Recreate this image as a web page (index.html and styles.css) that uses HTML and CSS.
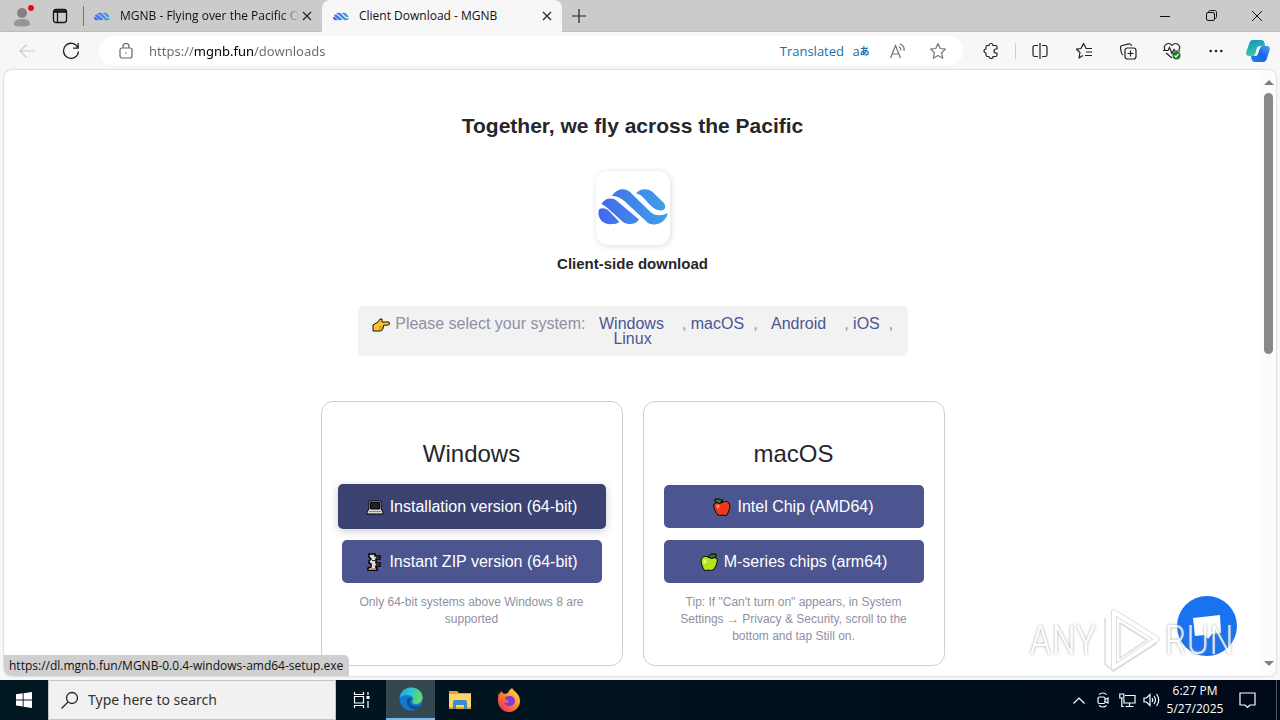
FILE: index.html
```html
<!DOCTYPE html>
<html lang="en">
<head>
<meta charset="utf-8">
<title>Client Download - MGNB</title>
<link rel="stylesheet" href="styles.css">
</head>
<body>
<svg class="defs" aria-hidden="true">
  <defs>
    <linearGradient id="wave" gradientUnits="userSpaceOnUse" x1="0" x2="70" y1="0" y2="0"><stop offset="0" stop-color="#4168f0"/><stop offset="1" stop-color="#40a2e6"/></linearGradient>
    <symbol id="mgnb" viewBox="0 0 70 36">
      <g fill="url(#wave)">
        <path d="M1 20.500C4 18.500 8 19 11 22L20.500 32Q21.500 34 19 34.300C15 35.500 9 36 5 33 1 30-.5 25 1 20.500Z"/>
        <path d="M3.500 15C7 9 14 8 19 12L41 30.500C38 35.500 30 36.500 25 33L10 19.500C8 17.500 6 16.500 3.500 15Z"/>
        <path d="M14 7C18 .5 26-2 32 3L52 22.500C57 27.500 64 27 69.500 24C69 32 59 38.500 50 34L27 12.500C23 9 19 7 14 7Z"/>
        <path d="M38 4.500C42-.5 49-1 54 2.500L65.500 13.500C69 18 67 22 62 21.500 54 21 48 10 43 6.500 41.500 5.500 40 4.800 38 4.500Z"/>
      </g>
    </symbol>
  </defs>
</svg>

<header class="tabbar">
  <button class="profile" aria-label="Profile">
    <svg width="24" height="24" viewBox="0 0 24 24"><circle cx="12" cy="9" r="5" fill="#858080"/><path d="M4 21c0-5 3-6 8-6s8 1 8 6c-3 2-13 2-16 0z" fill="#9a9595"/><circle cx="21" cy="4" r="3" fill="#e00b1c"/></svg>
  </button>
  <button class="workspace" aria-label="Tab actions">
    <svg width="16" height="16" viewBox="0 0 16 16" fill="none" stroke="#111" stroke-width="1.3"><rect x="1.5" y="1.5" width="13" height="13" rx="2.5"/><path d="M1.500 3.500h13" stroke-width="2.500"/><path d="M5.500 4v10"/></svg>
  </button>
  <nav class="tabs">
    <div class="tab">
      <svg class="favicon" viewBox="0 0 70 36"><use href="#mgnb"/></svg>
      <span class="tab-title fade">MGNB - Flying over the Pacific O</span>
      <button class="tab-close" aria-label="Close tab"><svg width="10" height="10" viewBox="0 0 10 10" stroke="#222" stroke-width="1.2"><path d="M1 1l8 8M9 1L1 9"/></svg></button>
    </div>
    <div class="tab active">
      <svg class="favicon" viewBox="0 0 70 36"><use href="#mgnb"/></svg>
      <span class="tab-title">Client Download - MGNB</span>
      <button class="tab-close" aria-label="Close tab"><svg width="10" height="10" viewBox="0 0 10 10" stroke="#222" stroke-width="1.2"><path d="M1 1l8 8M9 1L1 9"/></svg></button>
    </div>
  </nav>
  <button class="new-tab" aria-label="New tab"><svg width="14" height="14" viewBox="0 0 14 14" stroke="#222" stroke-width="1.2"><path d="M7 0v14M0 7h14"/></svg></button>
  <div class="window-buttons">
    <button aria-label="Minimize"><svg width="10" height="10" viewBox="0 0 10 10" stroke="#111"><path d="M0 5.5h10"/></svg></button>
    <button aria-label="Restore"><svg width="11" height="11" viewBox="0 0 11 11" stroke="#111" fill="none"><rect x=".5" y="2.5" width="8" height="8" rx="1.5"/><path d="M2.5 2.500c0-1.500.5-2 2-2H8.500c1.500 0 2 .5 2 2V6.500c0 1.500-.5 2-2 2"/></svg></button>
    <button aria-label="Close"><svg width="12" height="12" viewBox="0 0 12 12" stroke="#111"><path d="M1 1l10 10M11 1L1 11"/></svg></button>
  </div>
</header>

<div class="toolbar">
  <button class="tool" aria-label="Back"><svg width="16" height="14" viewBox="0 0 16 14" fill="none" stroke="#c9c9c9" stroke-width="1.200"><path d="M16 7H1M7.500.5L1 7l6.500 6.500"/></svg></button>
  <button class="tool" aria-label="Refresh"><svg width="18" height="18" viewBox="0 0 18 18" fill="none" stroke="#222" stroke-width="1.300"><path d="M16 6A7.500 7.500 0 1 0 16.500 9.500M16.200 1v5.200H11"/></svg></button>
  <div class="omnibox">
    <svg class="lock" width="14" height="16" viewBox="0 0 14 16" fill="none" stroke="#666" stroke-width="1.200"><rect x="1" y="5" width="12" height="10" rx="2"/><path d="M4 5V3.500a3 3 0 0 1 6 0V5"/><circle cx="7" cy="10" r=".8" fill="#666" stroke="none"/></svg>
    <input class="url" type="text" aria-label="Address" value="https://mgnb.fun/downloads">
    <span class="translated">Translated</span>
    <button class="translate" aria-label="Translate">a<b>あ</b></button>
    <button class="pill-tool" aria-label="Read aloud"><svg width="18" height="16" viewBox="0 0 18 16" fill="none" stroke="#707070" stroke-width="1.200"><path d="M1.500 15L6.500 2.500 11.500 15M3.200 11h6.700M10 3.500c1.500 1 2 2.500 1.800 4M11 1c3.500 1.500 4.500 4.500 4 7"/></svg></button>
    <button class="pill-tool" aria-label="Add to favorites"><svg width="18" height="18" viewBox="0 0 18 18" fill="none" stroke="#777" stroke-width="1.200" stroke-linejoin="round"><path d="M9 1.500l2.200 5 5.300.6-4 3.600 1.200 5.500L9 13.500l-4.700 2.700 1.200-5.500-4-3.600 5.300-.6z"/></svg></button>
  </div>
  <button class="tool" aria-label="Extensions"><svg width="18" height="18" viewBox="0 0 18 18" fill="none" stroke="#222" stroke-width="1.200" stroke-linejoin="round"><path d="M5 3.500h2a2 2 0 1 1 4 0h2.500q1.500 0 1.500 1.500V7h-1a2 2 0 1 0 0 4h1v2q0 1.500-1.500 1.500H11a2 2 0 1 1-4 0H5.500Q4 14.500 4 13V11a2 2 0 1 1 0-4V5q0-1.500 1-1.500z"/></svg></button>
  <span class="divider"></span>
  <button class="tool" aria-label="Split screen"><svg width="16" height="16" viewBox="0 0 16 16" fill="none" stroke="#222" stroke-width="1.200"><path d="M6 2.500H3Q1 2.500 1 4v8q0 1.500 2 1.500h3M10 2.500h3q2 0 2 1.500v8q0 1.500-2 1.500h-3M8 0v16"/></svg></button>
  <button class="tool" aria-label="Favorites"><svg width="18" height="18" viewBox="0 0 18 18" fill="none" stroke="#222" stroke-width="1.200" stroke-linejoin="round"><path d="M11 6L8.500 1.500 6 6.500l-4.500.7L5 10.500l-1 5.500 4-2.500M10.500 6.500H17M11 10h6M10 13.500h7"/></svg></button>
  <button class="tool" aria-label="Collections"><svg width="18" height="18" viewBox="0 0 18 18" fill="none" stroke="#222" stroke-width="1.200"><rect x="6" y="6" width="11" height="11" rx="2.500"/><path d="M11.500 8.500v6M8.500 11.500h6M4 13C3 12.500 2.500 11.500 2.200 10L1.500 6Q1.200 4 3 3.500L10 1.800q2-.3 2.500 2"/></svg></button>
  <button class="tool" aria-label="Browser essentials"><svg width="18" height="18" viewBox="0 0 18 18" fill="none" stroke="#222" stroke-width="1.200"><path d="M2 8C0 4 3 1.500 5.500 1.500 7.500 1.500 9 3.500 9 3.500S10.500 1.500 12.500 1.500C15 1.500 18 4 16 8M0 8.500h5l1.500-3 2.500 6 2-4 1 1.500h5M3 11l6 5"/><circle cx="13.500" cy="13.500" r="4" fill="#187a20" stroke="none"/><path d="M11.500 13.500l1.500 1.500 2.500-3" stroke="#fff"/></svg></button>
  <button class="tool" aria-label="Settings and more"><svg width="14" height="4" viewBox="0 0 14 4" fill="#222"><circle cx="1.700" cy="2" r="1.300"/><circle cx="7" cy="2" r="1.300"/><circle cx="12.300" cy="2" r="1.300"/></svg></button>
  <button class="tool copilot" aria-label="Copilot"><svg width="24" height="24" viewBox="0 0 24 24"><defs><linearGradient id="cpa" x1="0" y1="0" x2=".3" y2="1"><stop offset="0" stop-color="#168fc8"/><stop offset="1" stop-color="#39c9a0"/></linearGradient><linearGradient id="cpb" x1="1" y1="0" x2="0" y2="1"><stop offset="0" stop-color="#4aa8f2"/><stop offset=".5" stop-color="#1b62ea"/><stop offset="1" stop-color="#1688dd"/></linearGradient></defs><path d="M7 1h8q3 0 3.500 3l.5 3h-3q-3 0-4 3l-1.500 4q-1 3-3.500 3H3Q-.5 17 .3 13L3 5Q4 1 7 1z" fill="url(#cpa)"/><path d="M17 23H9q-3 0-3.500-3L5 17h3q3 0 4-3l1.500-4q1-3 3.500-3h4q3.500 0 2.700 4L21 19q-1 4-4 4z" fill="url(#cpb)"/><path d="M11 8.500q1-1.500 4-1.500-1 1-1.500 3l-1.500 5q-.5 2-3 2H8q1-1 1.500-3z" fill="#fff"/></svg></button>
</div>

<div class="viewport">
  <main class="page">
    <h1>Together, we fly across the Pacific</h1>
    <div class="app-logo"><svg width="70" height="36" viewBox="0 0 70 36"><use href="#mgnb"/></svg></div>
    <h2 class="subtitle">Client-side download</h2>

    <p class="systems"><svg class="emoji point" viewBox="0 0 18 14"><path d="M1 7l5-3 2-3h2v3h7l.5 2-1 1-5 .3v2l-1 2.500-2 1.200H1z" fill="#fcc42c" stroke="#111" stroke-linejoin="round"/><path d="M7 9h4M7 11h3" stroke="#b97e10"/></svg> Please select your system: <a class="wide" href="#windows">Windows</a><span class="sep">,</span> <a href="#macos">macOS</a><span class="sep">,</span> <a class="wide" href="#android">Android</a><span class="sep">,</span> <a href="#ios">iOS</a><span class="sep">,</span> <a href="#linux">Linux</a></p>

    <div class="cards">
      <section class="card" id="windows">
        <h3>Windows</h3>
        <a class="download hovered" href="#setup"><svg class="emoji" viewBox="0 0 18 18"><path d="M3 3h12v8l2 3v2H1v-2l2-3z" fill="#dadada" stroke="#000"/><path d="M4.500 4.500h9v6.500h-9z" fill="#222" stroke="#000"/><path d="M3 13.500h12" stroke="#888"/></svg>Installation version (64-bit)</a>
        <a class="download" href="#zip"><svg class="emoji" viewBox="0 0 18 18"><path d="M4 1h6v2h5v3h-4v4h4v3h-4v2h1v2.500H3V15l3-1v-3L4 10V8l2-2-2-2z" fill="#ddd" stroke="#000" stroke-width="1.500"/><path d="M11 4.500h3M7 7.500h3M11 11.500h3" stroke="#222"/><path d="M5 16h5" stroke="#c43"/></svg>Instant ZIP version (64-bit)</a>
        <p class="note">Only 64-bit systems above Windows 8 are supported</p>
      </section>
      <section class="card" id="macos">
        <h3>macOS</h3>
        <a class="download" href="#intel"><svg class="emoji" viewBox="0 0 18 18"><path d="M8 5c3-2 6-2 8 0 2 3 0 8-2 12-2 1-3 0-5 0-2 1-3 0-4 0C2 14 0 8 1 6c2-2 5-2 7-1z" fill="#ee3818" stroke="#000"/><path d="M2 1h5l3 3-4 1.500L2 4z" fill="#287c20" stroke="#000"/><path d="M8 4l2-3" stroke="#000"/><ellipse cx="5" cy="8.500" rx="1.500" ry="2" fill="#ff9475"/></svg>Intel Chip (AMD64)</a>
        <a class="download" href="#arm"><svg class="emoji" viewBox="0 0 18 18"><path d="M10 5c-3-2-6-2-8 0-2 3 0 8 2 12 2 1 3 0 5 0 2 1 3 0 4 0 3-3 5-9 4-11-2-2-5-2-7-1z" fill="#b5e61c" stroke="#000"/><path d="M16 1h-5L8 4l4 1.500L16 4z" fill="#287c20" stroke="#000"/><ellipse cx="5" cy="8.500" rx="1.500" ry="2" fill="#effc80"/></svg>M-series chips (arm64)</a>
        <p class="note">Tip: If "Can't turn on" appears, in System Settings → Privacy &amp; Security, scroll to the bottom and tap Still on.</p>
      </section>
    </div>
  </main>
  <div class="scrollbar" aria-hidden="true">
    <span class="arrow up"></span>
    <span class="track"><span class="thumb"></span></span>
    <span class="arrow down"></span>
  </div>
  <button class="chat" aria-label="Open chat"><svg width="30" height="26" viewBox="0 0 30 26" fill="#fff"><path d="M1 5L28 2l1 18-9 1-4 5-3-4-10 1z"/></svg></button>
  <div class="watermark"><span>ANY</span><svg width="60" height="66" viewBox="0 0 60 66" fill="none" stroke-linejoin="round"><path d="M13 4L56 31 13 60z" stroke="#d6d6d6" stroke-width="6"/><path d="M13 4L56 31 13 60z" stroke="#fff" stroke-width="4"/><path d="M19 15v35L46 32zM4 10v46l8 7 44-28" stroke="#d2d2d2" stroke-width="1.500"/></svg><span>RUN</span></div>
  <div class="status">https://dl.mgnb.fun/MGNB-0.0.4-windows-amd64-setup.exe</div>
</div>

<footer class="taskbar">
  <button class="task start" aria-label="Start"><svg width="16" height="16" viewBox="0 0 16 16" fill="#fff"><path d="M0 2.300l6.700-1v6.200H0zM7.600 1.200L16 0v7.500H7.600zM0 8.400h6.700v6.200l-6.700-1zM7.600 8.400H16V16l-8.400-1.200z"/></svg></button>
  <label class="search">
    <svg width="18" height="18" viewBox="0 0 18 18" fill="none" stroke="#222" stroke-width="1.300"><circle cx="11" cy="7" r="5.500"/><path d="M7 11l-6.500 6.500"/></svg>
    <input type="text" placeholder="Type here to search" aria-label="Search">
  </label>
  <button class="task" aria-label="Task view"><svg width="18" height="16" viewBox="0 0 18 16" fill="none" stroke="#fff" stroke-width="1.200"><path d="M1.500 0v2.500h9V0M1.500 16v-2.500h9V16M1.500 4.500h9v6.500h-9zM15 0v3M15 9v7"/><path d="M13.500 4h3v3h-3z" fill="#fff" stroke="none"/></svg></button>
  <button class="task current" aria-label="Microsoft Edge"><svg width="24" height="24" viewBox="0 0 24 24"><defs><linearGradient id="edg" x1="0" y1="0" x2="1" y2=".3"><stop offset="0" stop-color="#229bdc"/><stop offset=".5" stop-color="#30c4d4"/><stop offset="1" stop-color="#5fdc66"/></linearGradient></defs><circle cx="12" cy="12" r="11.500" fill="#1479cd"/><path d="M.8 11C1 5 6 .5 12 .5c7 0 12 5 11.500 10.500-.5 4-3.500 6-7 6-2 0-4-1-3-2.500 2-3 0-6.500-5-6.500-4 0-6.500 1.500-7.700 3z" fill="url(#edg)"/><path d="M8 13c-1 5 3 9.500 8 9.500 2-.5 4-2 5-4-5 2-10 0-10-4 0-1.500 1-2.500 2-3-2-1.500-4.500-.5-5 1.500z" fill="#124e9c"/></svg></button>
  <button class="task" aria-label="File Explorer"><svg width="22" height="20" viewBox="0 0 22 20"><path d="M0 1h8l2 2h12v16H0z" fill="#e7a52b"/><path d="M0 4h22v13H0z" fill="#fbd567"/><path d="M4 19v-7q0-2 2-2h10q2 0 2 2v7h-3v-4H7v4z" fill="#3c8cc8"/></svg></button>
  <button class="task" aria-label="Firefox"><svg width="24" height="24" viewBox="0 0 24 24"><defs><linearGradient id="ff" x1="1" y1="0" x2=".1" y2="1"><stop offset="0" stop-color="#fff04a"/><stop offset=".45" stop-color="#ff9325"/><stop offset="1" stop-color="#ee2068"/></linearGradient></defs><path d="M2 5l1 1 1-3 3 3 4-1c0-2 3-4 4-5 1 3 8 5 8 13 0 6-5 11-11 11S1 19 1 13c0-3 0-6 1-8z" fill="url(#ff)"/><path d="M8 9l4-1c4 0 6 2 6 5 0 3-3 5-6 5s-5-2-5-4c2 2 4 1 5-1-2 0-4-1-4-4z" fill="#8138dc"/></svg></button>
  <div class="tray">
    <button aria-label="Show hidden icons"><svg width="12" height="7" viewBox="0 0 12 7" fill="none" stroke="#fff" stroke-width="1.200"><path d="M.5 6.500L6 1l5.500 5.500"/></svg></button>
    <button aria-label="Meet now"><svg width="12" height="16" viewBox="0 0 12 16" fill="none" stroke="#fff" stroke-width="1.200"><rect x="1" y="5" width="7" height="6.500" rx="1.500"/><path d="M8 7.500l3-1.500v5l-3-1.500M2 2.500Q6-.5 9.500 2.500M2 13.500q4 3 7.500 0"/></svg></button>
    <button aria-label="Network"><svg width="17" height="15" viewBox="0 0 17 15" fill="none" stroke="#fff" stroke-width="1.200"><path d="M6 2.500h10v7.500H5V6M10.500 10v3.500M6.500 13.500h8M.8 1h4v4h-4zM2.800 5v8.500h2"/></svg></button>
    <button aria-label="Volume"><svg width="17" height="14" viewBox="0 0 17 14" fill="none" stroke="#fff" stroke-width="1.200"><path d="M1 5h2.500L7 1.500v11L3.500 9H1zM9 5q1.500 2 0 4M11 3q3 4 0 8M13.500 1q4.500 6 0 12"/></svg></button>
    <div class="clock"><time>6:27 PM</time><time>5/27/2025</time></div>
    <button class="notices" aria-label="Notifications"><svg width="17" height="17" viewBox="0 0 17 17" fill="none" stroke="#fff" stroke-width="1.200"><path d="M1 1h15v12h-5l-2.500 2.500L6 13H1z"/></svg></button>
    <span class="desktop-edge"></span>
  </div>
</footer>
</body>
</html>
```
FILE: styles.css
```css
* { box-sizing: border-box; }

body {
  margin: 0;
  height: 100vh;
  display: flex;
  flex-direction: column;
  overflow: hidden;
  background: #f7f7f7;
  color: #222;
  font: 12px/16px "Open Sans", "Noto Sans", "Noto Sans CJK JP", sans-serif;
}

button {
  border: 0;
  padding: 0;
  background: none;
  color: inherit;
  font: inherit;
  display: flex;
  align-items: center;
  justify-content: center;
}

svg { display: block; flex: none; }
.defs { position: absolute; width: 0; height: 0; }

/* Tab strip */
.tabbar {
  flex: none;
  height: 32px;
  display: flex;
  background: #cbcbcb;
  border-bottom: 1px solid #bdbdbd;
}
.profile { width: 44px; }
.workspace { width: 32px; }
.tabs { display: flex; margin-left: 7px; }
.tab {
  position: relative;
  width: 239px;
  height: 32px;
  display: flex;
  align-items: center;
  padding: 0 10px 0 11px;
  gap: 10px;
}
.tab:first-child::before {
  content: "";
  position: absolute;
  left: 0;
  top: 6px;
  height: 20px;
  border-left: 1px solid #777;
}
.tab.active {
  width: 240px;
  background: #f7f7f7;
  border-radius: 8px 8px 0 0;
}
.favicon { width: 16px; height: 9px; }
.tab-title {
  flex: 1;
  min-width: 0;
  white-space: nowrap;
  color: #111;
}
.fade {
  margin-right: -8px;
  -webkit-mask-image: linear-gradient(90deg, #000 90%, transparent);
  mask-image: linear-gradient(90deg, #000 90%, transparent);
}
.tab-close { width: 11px; height: 16px; }
.new-tab { width: 34px; }
.window-buttons { display: flex; margin-left: auto; }
.window-buttons button { width: 46px; }

/* Toolbar */
.toolbar {
  flex: none;
  height: 38px;
  display: flex;
  align-items: center;
  padding: 0 2px 0 5px;
}
.tool { width: 44px; height: 32px; }
.copilot { width: 40px; }
.omnibox {
  flex: 1;
  min-width: 0;
  height: 30px;
  margin: 0 6px;
  padding: 0 5px 0 20px;
  display: flex;
  align-items: center;
  background: #fff;
  border-radius: 15px;
}
.url {
  flex: 1;
  min-width: 0;
  margin-left: 16px;
  padding: 0;
  border: 0;
  outline: 0;
  font: 13px/20px "Noto Sans", "Open Sans", sans-serif;
  color: #111;
  background: linear-gradient(90deg, #6a6a6a 45px, #000 45px, #000 105px, #6a6a6a 105px);
  -webkit-background-clip: text;
  background-clip: text;
  -webkit-text-fill-color: transparent;
}
.translated { color: #1a6fb0; font-size: 13px; }
.translate { width: 34px; color: #1a6fb0; font-size: 13px; }
.translate b { font-size: 10px; }
.pill-tool { width: 40px; height: 30px; }
.divider { width: 1px; height: 16px; margin: 0 2px; background: #d0d0d0; }

/* Page viewport */
.viewport {
  position: relative;
  flex: 1;
  min-height: 0;
  margin: 0 4px 4px;
  display: flex;
  overflow: hidden;
  background: #fff;
  border-radius: 8px;
  box-shadow: 0 0 2px #aaa;
}
.page {
  flex: 1;
  min-width: 0;
  display: flex;
  flex-direction: column;
  align-items: center;
  padding-top: 40px;
  font-family: "Liberation Sans", Arial, sans-serif;
}
.page h1 { margin: 0; font-size: 21px; line-height: 32px; color: #26262b; }
.app-logo {
  width: 74px;
  height: 74px;
  margin-top: 29px;
  padding-bottom: 2px;
  display: grid;
  place-items: center;
  border-radius: 12px;
  box-shadow: 1px 1px 6px rgba(0, 0, 0, .14);
}
.subtitle { margin: 9px 0 0; font-size: 15px; line-height: 20px; color: #26262b; }
.systems {
  width: 550px;
  max-width: 100%;
  margin: 32px 0 0;
  padding: 10px 8px;
  text-align: center;
  background: #f2f2f2;
  border-radius: 5px;
  color: #8f90a3;
  font-size: 16px;
  line-height: 15px;
}
.systems a { color: #4c5590; text-decoration: none; }
.systems .wide { padding: 0 9px; }
.sep { margin-left: 9px; }
.emoji {
  width: 18px;
  height: 18px;
  margin-right: 6px;
}
.point {
  display: inline-block;
  height: 14px;
  margin-right: 1px;
  vertical-align: -2px;
}
.point { margin-top: -4px; margin-bottom: -1px; }

.cards { display: flex; gap: 20px; margin-top: 45px; }
.card {
  width: 302px;
  height: 265px;
  padding: 32px 20px 0;
  display: flex;
  flex-direction: column;
  align-items: center;
  border: 1px solid #cfcfcf;
  border-radius: 12px;
}
.card h3 { margin: 0 0 12px; font-size: 24px; line-height: 39px; font-weight: 400; color: #26262b; }
.download {
  flex: none;
  width: 260px;
  height: 43px;
  margin-bottom: 12px;
  display: flex;
  align-items: center;
  justify-content: center;
  border-radius: 5px;
  background: #4c5590;
  color: #fff;
  font-size: 16px;
  text-decoration: none;
}
.hovered {
  width: 268px;
  height: 45px;
  margin: -1px 0 11px;
  background: #3b4272;
  box-shadow: 0 2px 8px rgba(0, 0, 0, .2);
}
.note {
  margin: -1px 0 0;
  padding: 0 10px;
  text-align: center;
  font-size: 12px;
  line-height: 17px;
  color: #8f90a3;
}

/* Scrollbar */
.scrollbar {
  flex: none;
  width: 15px;
  display: flex;
  flex-direction: column;
  align-items: center;
  padding: 10px 0;
  background: #fcfcfc;
}
.arrow { border: 5px solid transparent; }
.up { border-top: 0; border-bottom-color: #808080; }
.down { border-bottom: 0; border-top-color: #808080; }
.track { flex: 1; width: 9px; padding-top: 8px; }
.thumb { display: block; height: 46%; border-radius: 5px; background: #888; }

/* Overlays */
.chat {
  position: absolute;
  right: 39px;
  bottom: 20px;
  width: 60px;
  height: 60px;
  border-radius: 50%;
  background: #1972f0;
}
.watermark {
  position: absolute;
  right: 42px;
  bottom: 2px;
  display: flex;
  align-items: center;
  gap: 4px;
  opacity: .8;
  color: #fff;
  font: 300 40px/66px "Roboto Condensed", "Liberation Sans Narrow", "Open Sans Condensed", "Roboto", sans-serif;
  text-shadow: 0 0 3px #888;
  pointer-events: none;
}
.status {
  position: absolute;
  left: 0;
  bottom: 0;
  padding: 2px 6px 2px 5px;
  background: #cfcfcf;
  border-radius: 0 5px 0 0;
  font-size: 12px;
  line-height: 17px;
  color: #111;
}

/* Taskbar */
.taskbar {
  flex: none;
  height: 40px;
  display: flex;
  background: linear-gradient(90deg, #001820, #00131f 50%, #00091a);
  color: #fff;
}
.task { width: 49px; }
.start { width: 48px; }
.search {
  width: 288px;
  margin-right: 1px;
  display: flex;
  align-items: center;
  gap: 9px;
  padding-left: 12px;
  background: #f1f1f1;
  border: 1px solid #c4c4c4;
}
.search input {
  flex: 1;
  min-width: 0;
  padding: 0;
  border: 0;
  outline: 0;
  background: none;
  font: 14px/20px "Noto Sans", "Open Sans", sans-serif;
}
.search input::placeholder { color: #333; opacity: 1; }
.current { background: #33484f; border-bottom: 2px solid #76b9ed; }
.tray { margin-left: auto; display: flex; align-items: stretch; }
.tray button { width: 24px; }
.clock {
  width: 64px;
  display: flex;
  flex-direction: column;
  align-items: center;
  justify-content: center;
  line-height: 18px;
}
.tray .notices { width: 40px; }
.desktop-edge { width: 4px; margin-left: 9px; border-left: 1px solid #4a5560; }
```
